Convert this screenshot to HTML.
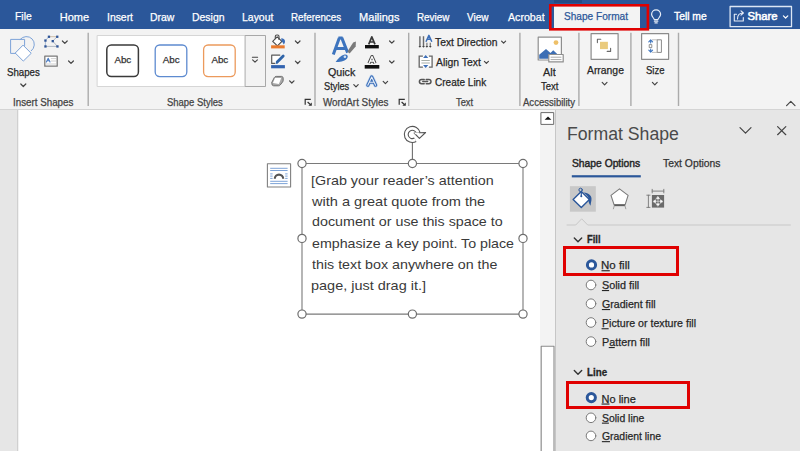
<!DOCTYPE html>
<html><head><meta charset="utf-8">
<style>
html,body{margin:0;padding:0;}
body{width:800px;height:451px;overflow:hidden;position:relative;background:#e6e6e6;font-family:"Liberation Sans",sans-serif;}
.t{position:absolute;white-space:pre;line-height:normal;transform-origin:0 0;-webkit-text-stroke:0.25px currentColor;}
.a{position:absolute;}
svg{position:absolute;overflow:visible;}
</style></head><body>
<!-- title bar -->
<div class="a" style="left:0;top:0;width:800px;height:29px;background:#2B579A"></div>
<div class="a" style="left:554px;top:0;width:28px;height:3px;background:#244A84"></div>
<div class="a" style="left:554px;top:6px;width:86px;height:24px;background:#F3F3F3"></div>
<!-- ribbon -->
<div class="a" style="left:0;top:29px;width:800px;height:80px;background:#F3F3F3;border-bottom:1px solid #D4D4D4"></div>
<!-- doc -->
<div class="a" style="left:0;top:110px;width:17px;height:341px;background:#E6E6E6;border-right:1px solid #D0D0D0"></div>
<div class="a" style="left:18px;top:110px;width:523px;height:341px;background:#FFFFFF"></div>
<div class="a" style="left:18px;top:110px;width:1px;height:341px;background:#F2F2F2"></div>
<!-- scrollbar -->
<div class="a" style="left:540px;top:110px;width:15px;height:341px;background:#F3F3F3"></div>
<!-- pane -->
<div class="a" style="left:555px;top:110px;width:1px;height:341px;background:#C6C6C6"></div>
<div class="a" style="left:556px;top:110px;width:244px;height:341px;background:#E6E6E6"></div>
<!-- red boxes -->

<div class="a" style="left:563px;top:246px;width:110px;height:24px;border:3px solid #E00000"></div>
<div class="a" style="left:566px;top:381px;width:118px;height:22px;border:3px solid #E00000"></div>
<svg width="800" height="451" style="left:0;top:0" viewBox="0 0 800 451">
<g fill="none" stroke-linecap="round" stroke-linejoin="round">
<rect x="550.3" y="5.3" width="97.6" height="24" stroke="#E00000" stroke-width="2.6" stroke-linejoin="miter"/>
<!-- lightbulb -->
<path d="M654.3,19.6 C653.6,17.6 651.6,16.6 651.6,14.3 A4.5,4.5 0 0 1 660.6,14.3 C660.6,16.6 658.6,17.6 657.9,19.6 Z" stroke="#E8EEF8" stroke-width="1.2"/>
<path d="M654.4,21.2 H657.8 M655,22.9 H657.2" stroke="#E8EEF8" stroke-width="1.2"/>
<!-- share button -->
<rect x="730.1" y="6.5" width="61.4" height="20.2" stroke="#DCE6F4" stroke-width="1.3"/>
<path d="M736.5,14.3 H734.3 V21 H743.3 V17.5" stroke="#E8EEF8" stroke-width="1.1"/>
<path d="M737.5,19 C737.5,15.5 739.5,13 743,13 M741,10.8 L743.4,13 L741,15.2" stroke="#E8EEF8" stroke-width="1.1"/>
<path d="M783.4,15.8 L785.6,18 L787.8,15.8" stroke="#FFFFFF" stroke-width="1.2"/>
<!-- ribbon chevrons -->
<g stroke="#444" stroke-width="1.2">
<path d="M20.8,84 L23.3,86.5 L25.8,84"/>
<path d="M62.4,41 L64.8,43.4 L67.2,41"/>
<path d="M68.6,61 L71,63.4 L73.4,61"/>
<path d="M295.4,41 L297.7,43.3 L300,41"/>
<path d="M295.4,61.2 L297.7,63.5 L300,61.2"/>
<path d="M289.6,80.8 L291.8,83 L294,80.8"/>
<path d="M353.8,84.6 L356,86.8 L358.2,84.6"/>
<path d="M389.6,41 L391.8,43.2 L394,41"/>
<path d="M389.6,61 L391.8,63.2 L394,61"/>
<path d="M383.2,81.4 L385.4,83.6 L387.6,81.4"/>
<path d="M501.6,41.2 L503.6,43.2 L505.6,41.2"/>
<path d="M484.4,61.3 L486.4,63.3 L488.4,61.3"/>
<path d="M602.2,82.4 L604.6,84.8 L607,82.4"/>
<path d="M652.4,82.4 L654.8,84.8 L657.2,82.4"/>
<path d="M786.6,105.6 L790.8,101.4 L795,105.6"/>
</g>
<!-- separators -->
<g stroke="#ABABAB" stroke-width="1.4" stroke-linecap="butt">
<path d="M88.2,32.8 V105.9 M315,32.8 V105.9 M408.7,32.8 V105.9 M519.9,32.8 V105.9 M578.9,32.8 V105.9 M630.9,32.8 V105.9 M678.5,32.8 V105.9"/>
</g>
<!-- Shapes icon -->
<g stroke="#7DA3D8" stroke-width="1">
<path d="M24.6,45.5 V39.4 H10.6 V53.4 H15.5"/>
<path d="M20.2,39.4 A8,8 0 1 1 31.3,50.8"/>
<path d="M23.3,45.4 L31.2,53.3 L23.3,61.1 L15.5,53.3 Z" fill="#FFFFFF"/>
</g>
<!-- edit shape icon -->
<path d="M48.9,36.7 H57.2" stroke="#C9B9A0" stroke-width="0.9"/>
<path d="M45.4,40.5 L48.9,36.7 M45.4,40.5 V46.4" stroke="#8FA8CC" stroke-width="0.8" stroke-dasharray="1 1"/>
<path d="M57.2,36.7 L52.7,41.1 L57.4,46.4 M45.4,46.4 H57.4" stroke="#A9B1BC" stroke-width="0.9"/>
<g fill="#2F5597" stroke="none">
<rect x="44.3" y="39.4" width="2.3" height="2.3"/><rect x="47.8" y="35.6" width="2.3" height="2.3"/>
<rect x="56.1" y="35.6" width="2.3" height="2.3"/><rect x="51.6" y="40" width="2.3" height="2.3"/>
<rect x="44.3" y="45.3" width="2.3" height="2.3"/><rect x="56.3" y="45.3" width="2.3" height="2.3"/>
</g>
<!-- text box icon -->
<rect x="44.8" y="56.2" width="12.4" height="10" fill="#FFFFFF" stroke="#7A7A7A" stroke-width="1.3"/>
<path d="M46.4,62 L48.2,58.2 L50,62 M47.1,60.7 H49.3" stroke="#4A7CC4" stroke-width="1.1"/>
<path d="M51.2,58.6 H55.8 M51.2,61 H55.8 M46.4,64 H55.8" stroke="#B0B0B0" stroke-width="0.6"/>
<!-- gallery -->
<rect x="97.5" y="35.5" width="168" height="51" fill="#FFFFFF" stroke="#D6D6D6" stroke-width="1"/>
<rect x="245.5" y="35.5" width="20" height="51" fill="#F3F3F3" stroke="#A8A8A8" stroke-width="1"/>
<path d="M252.4,57.2 H257.6 M252.6,59.8 L255,62.2 L257.4,59.8" stroke="#444" stroke-width="1.1"/>
<rect x="106.8" y="45" width="31.6" height="31.6" rx="4.5" fill="#FFFFFF" stroke="#3A3A3A" stroke-width="1.5"/>
<rect x="155.2" y="45" width="31.6" height="31.6" rx="4.5" fill="#FFFFFF" stroke="#5E8BD0" stroke-width="1.3"/>
<rect x="203.6" y="45" width="31.6" height="31.6" rx="4.5" fill="#FFFFFF" stroke="#EC9A5C" stroke-width="1.3"/>
<!-- shape fill icon -->
<path d="M272.7,41.4 L277.2,36.9 L281.9,41.4 L277.4,45.8 Z" fill="#FFFFFF" stroke="#4A4A4A" stroke-width="1.1"/>
<path d="M275.3,38.6 V36.4 Q275.3,35 276.8,35 H277.6 Q279,35 279,36.4 V39.4" stroke="#4A4A4A" stroke-width="1.1"/>
<path d="M281.2,38.2 C283.6,38.2 285.4,39.8 285,42 C284.8,43.2 284.2,44 283.6,44.6 C283.2,43 282.6,42 281.6,41.4 Z" fill="#3C6EB8" stroke="none"/>
<rect x="271.1" y="45.3" width="13.6" height="3.1" fill="#E97A2E" stroke="none"/>
<!-- shape outline icon -->
<rect x="271.7" y="55.2" width="8" height="8" fill="#FFFFFF" stroke="none"/>
<path d="M280.2,55.2 H271.7 V63.4 H275.2" stroke="#5A5A5A" stroke-width="1.2" stroke-linecap="butt"/>
<path d="M277.2,62 L283.2,56" stroke="#2F64A8" stroke-width="2.8" stroke-linecap="round"/>
<path d="M275.6,63.9 L276.3,61.4 L278.1,63.2 Z" fill="#2F64A8" stroke="none"/>
<rect x="271.1" y="65.1" width="13.8" height="3.2" fill="#3263B0" stroke="none"/>
<!-- shape effects -->
<path d="M271.8,82.4 L274.4,77.4 Q275,76.4 276.2,76.4 H281.6 Q282.8,76.4 283.1,77.8 L283.2,80.2 Q283.2,81.2 282.5,82.1 L280.2,85 Q279.6,85.8 278.6,85.8 H273.6 Q271.8,85.6 271.8,83.8 Z" fill="#A8A8A8" stroke="#6E6E6E" stroke-width="1"/>
<path d="M272.9,82.9 L275,78 H281.2 L278.9,83.9 Z" fill="#FFFFFF" stroke="none"/>
<!-- quick styles icon -->
<path d="M333.3,54.4 L339.3,37.9 M338.4,37.9 H342.6 M341.8,37.9 L347.6,52.6 M335.8,48.6 H345" stroke="#3D74BE" stroke-width="3" stroke-linecap="butt" stroke-linejoin="miter"/>
<path d="M353.2,42.6 L355.9,41.6 L355.7,46.4 L349.6,53.4 L347.4,51.6 Z" fill="#7A7A7A" stroke="none"/>
<path d="M335.6,61.9 C338,58.6 341,55.4 344.6,54.6 C346.8,54.2 348.6,55.6 347.4,58 C345.6,61 340,62.2 335.6,61.9 Z" fill="#3D74BE" stroke="none"/>
<circle cx="344.9" cy="56.7" r="1.3" fill="#D6E4F5" stroke="none"/>
<!-- text fill A -->
<path d="M368.7,44.4 L371.8,36.9 L375,44.4 M369.8,42 H373.9" stroke="#3A3A3A" stroke-width="1.7" stroke-linecap="butt"/>
<rect x="365" y="45" width="13.8" height="3.4" fill="#111" stroke="none"/>
<!-- text outline A -->
<path d="M369,63.4 L372,56.6 L375,63.4 M370.2,61 H373.8" stroke="#4A4A4A" stroke-width="3.3" stroke-linecap="butt" stroke-linejoin="round"/>
<path d="M369,63.4 L372,56.6 L375,63.4 M370.2,61 H373.8" stroke="#FFFFFF" stroke-width="1.3" stroke-linecap="butt" stroke-linejoin="round"/>
<rect x="364.7" y="65" width="14.6" height="3.6" fill="#111" stroke="none"/>
<!-- text effects A -->
<path d="M367.8,85.2 L371.7,77 L375.6,85.2 M369.4,82.2 H374" stroke="#C9DBF1" stroke-width="4.6" stroke-linecap="round"/>
<path d="M367.8,85.2 L371.7,77 L375.6,85.2 M369.4,82.2 H374" stroke="#3D6FB8" stroke-width="3.2" stroke-linecap="round"/>
<path d="M367.8,85.2 L371.7,77 L375.6,85.2 M369.4,82.2 H374" stroke="#E6EEF8" stroke-width="1.1" stroke-linecap="round"/>
<!-- text direction icon -->
<path d="M419.9,36.3 V46.6 M423.5,36.3 V46.6" stroke="#6A6A6A" stroke-width="1.4" stroke-linecap="butt"/>
<path d="M426.9,42.8 V46.6 M430.3,42.8 V46.6" stroke="#777" stroke-width="1.2" stroke-linecap="butt"/>
<path d="M418.5,46 L421.3,46 L419.9,47.8 Z M422.1,46 L424.9,46 L423.5,47.8 Z M425.5,46 L428.3,46 L426.9,47.8 Z M428.9,46 L431.7,46 L430.3,47.8 Z " fill="#444" stroke="none"/>
<path d="M426.2,41.2 L428.9,35.4 L431.6,41.2 M427.2,39.3 H430.6" stroke="#3D6FB8" stroke-width="1.5"/>
<!-- align text icon -->
<rect x="419.2" y="56.2" width="12.9" height="10.9" fill="#FFFFFF" stroke="none"/>
<path d="M422.9,56.2 H419.2 V67.1 H422.9 M428.9,56.2 H432.1 V67.1 H428.9" stroke="#666" stroke-width="1.3" stroke-linecap="butt" stroke-linejoin="miter"/>
<path d="M425.7,55.1 L428.3,58.1 H423.1 Z M425.7,68.1 L428.3,65.1 H423.1 Z" fill="#3D6FB8" stroke="none"/>
<path d="M421.4,60.5 H429.8 M421.4,63 H429.8" stroke="#9DA59D" stroke-width="0.9" stroke-linecap="butt"/>
<!-- create link -->
<path d="M424.2,79.4 H421.6 A2.2,2.2 0 0 0 421.6,83.8 H424.2 M426.2,79.4 H428.8 A2.2,2.2 0 0 1 428.8,83.8 H426.2 M422.8,81.6 H427.6" stroke="#555" stroke-width="1.5"/>
<!-- alt text icon -->
<rect x="538.2" y="37.2" width="23.2" height="22.8" fill="#FFFFFF" stroke="#8F8F8F" stroke-width="1.2"/>
<circle cx="556" cy="42.6" r="2.4" fill="#EEC068" stroke="none"/>
<path d="M539.2,58.8 V54.8 L546,49 L550.5,53 L553.2,50.2 L557,53.8 V58.8 Z" fill="#3C6EB4" stroke="none"/>
<rect x="548.8" y="54.5" width="14.4" height="7.4" fill="#FFFFFF" stroke="#8F8F8F" stroke-width="1.2"/>
<path d="M551,57.2 H561 M551,59.6 H561" stroke="#A0A0A0" stroke-width="0.9"/>
<!-- arrange -->
<rect x="591.1" y="33.7" width="27" height="25.6" fill="#FFFFFF" stroke="#8C8C8C" stroke-width="1.2"/>
<rect x="600" y="41.8" width="7.9" height="7.3" fill="#EACB7E" stroke="none"/>
<path d="M597.4,42.6 V39.2 H600.8 M610.6,48.2 V51.4 H607.2" stroke="#6A6A6A" stroke-width="1.1"/>
<!-- size -->
<rect x="641.6" y="33.7" width="27" height="25.6" fill="#FFFFFF" stroke="#8C8C8C" stroke-width="1.2"/>
<rect x="657.6" y="39.8" width="3.8" height="12.6" fill="#FFFFFF" stroke="#8A8A8A" stroke-width="1"/>
<path d="M650.7,40 V43 M648.8,41.8 L650.7,39.9 L652.6,41.8 M650.7,49 V52 M648.8,50.2 L650.7,52.1 L652.6,50.2" stroke="#3D74BE" stroke-width="1.1"/>
<rect x="649.6" y="44.6" width="2.2" height="3" fill="none" stroke="#777" stroke-width="0.8"/>
<path d="M652.5,39.8 H657.4 M652.5,52.4 H657.4" stroke="#999" stroke-width="0.7" stroke-dasharray="1 1"/>
<!-- dialog launchers -->
<path d="M305.2,104.8 V99.4 H310.8 M307.6,102 L310.6,104.8" stroke="#333" stroke-width="1.2" stroke-linecap="butt" stroke-linejoin="miter"/><path d="M311.8,105.8 H308.4 L311.8,102.4 Z" fill="#333" stroke="none"/>
<path d="M399.2,104.8 V99.4 H404.8 M401.6,102 L404.6,104.8" stroke="#333" stroke-width="1.2" stroke-linecap="butt" stroke-linejoin="miter"/><path d="M405.8,105.8 H402.4 L405.8,102.4 Z" fill="#333" stroke="none"/>
</g>
</svg>

<svg width="800" height="451" style="left:0;top:0" viewBox="0 0 800 451">
<g fill="none" stroke-linecap="round" stroke-linejoin="round">
<!-- layout options icon -->
<rect x="267.4" y="163.8" width="23.2" height="23.2" fill="#FFFFFF" stroke="#808080" stroke-width="1.1"/>
<path d="M270.2,168.3 H287.6 M270.2,170.5 H287.6 M270.2,181.3 H287.6 M270.2,183.6 H287.6 M270.2,173.9 H272.6 M285.2,173.9 H287.6 M270.2,176.1 H272.6 M285.2,176.1 H287.6 M270.2,178.4 H272.6 M285.2,178.4 H287.6" stroke="#6E98D2" stroke-width="0.9" stroke-linecap="butt"/>
<path d="M274.8,178.8 A4.2,4.2 0 0 1 283.2,178.8" stroke="#555" stroke-width="2.1" stroke-linecap="butt"/>
<!-- text box -->
<rect x="302" y="163.5" width="221" height="150.6" stroke="#7A7A7A" stroke-width="1.1"/>
<path d="M412.4,142.2 V159.3" stroke="#6E6E6E" stroke-width="1.1"/>
<g fill="#FFFFFF" stroke="#6E6E6E" stroke-width="1.2">
<circle cx="302" cy="163.5" r="4.1"/><circle cx="412.4" cy="163.5" r="4.1"/><circle cx="523" cy="163.5" r="4.1"/>
<circle cx="302" cy="238.4" r="4.1"/><circle cx="523" cy="238.4" r="4.1"/>
<circle cx="302" cy="314.1" r="4.1"/><circle cx="412.4" cy="314.1" r="4.1"/><circle cx="523" cy="314.1" r="4.1"/>
</g>
<!-- rotate -->
<path d="M415.3,139.8 A6.1,6.1 0 1 1 418.3,133.2" stroke="#555" stroke-width="5" stroke-linecap="butt"/>
<path d="M415.3,139.8 A6.1,6.1 0 1 1 418.3,133.2" stroke="#FFFFFF" stroke-width="2.8" stroke-linecap="butt"/>
<path d="M414.2,133 L425.6,132.5 L419.4,138.4 Z" fill="#FFFFFF" stroke="#555" stroke-width="1.1"/>
<path d="M415.4,133.4 L418.5,133.3" stroke="#FFFFFF" stroke-width="1.6"/>
<!-- scrollbar -->
<rect x="541.3" y="112.6" width="12.4" height="11.8" fill="#FFFFFF" stroke="#6A6A6A" stroke-width="1"/>
<path d="M544.6,119.8 H551.4 L548,116.4 Z" fill="#111" stroke="none"/>
<rect x="541.2" y="346.2" width="12.8" height="120" fill="#FFFFFF" stroke="#8A8A8A" stroke-width="1.1"/>
<!-- pane header -->
<path d="M740,127.6 L745.5,133.2 L751,127.6" stroke="#444" stroke-width="1.2"/>
<path d="M777.6,126.6 L785.8,134.7 M785.8,126.6 L777.6,134.7" stroke="#444" stroke-width="1.2"/>
<rect x="571.8" y="175.2" width="69" height="2.2" fill="#2B579A" stroke="none"/>
<!-- fill icon -->
<rect x="569.9" y="186.2" width="25.9" height="25.5" fill="#C8C8C8" stroke="none"/>
<path d="M573.1,199.5 L581.3,191.5 L589.4,199.5 L581.3,207.6 Z" fill="#FFFFFF" stroke="#2B579A" stroke-width="1.4"/>
<circle cx="580.6" cy="189.9" r="1.7" stroke="#2B579A" stroke-width="1"/>
<path d="M581.3,191.5 V196" stroke="#2B579A" stroke-width="1.2"/>
<circle cx="581.3" cy="196.3" r="1" fill="#2B579A" stroke="none"/>
<path d="M583.5,192.6 C589,193.2 592.3,196 591.4,200.4 C591,202.6 590.6,204.2 590.6,205.8 C589.4,204 588.3,202.2 588.6,199.4 C588.8,197.5 587.5,195.2 583.5,192.6 Z" fill="#2B579A" stroke="none"/>
<!-- pentagon -->
<path d="M619.5,188.9 L628.1,195.4 L625,205.1 L614.2,205.1 L611,195.4 Z" fill="#FFFFFF" stroke="#7A7A7A" stroke-width="1.1"/>
<path d="M614.2,205.2 H625" stroke="#5E5E5E" stroke-width="1.9" stroke-linecap="butt"/>
<path d="M614.2,206 L613.4,208.8 M625,206 L625.8,208.8" stroke="#A0A0A0" stroke-width="1"/>
<!-- size/props icon -->
<rect x="651.9" y="195" width="12.2" height="12.6" fill="#6A6A6A" stroke="none"/>
<path d="M658,198.4 V204.2 M655.2,201.3 H660.8" stroke="#DDDDDD" stroke-width="0.7"/>
<path d="M658,196.6 L659.6,198.8 H656.4 Z M658,206 L659.6,203.8 H656.4 Z M653.3,201.3 L655.5,199.7 V202.9 Z M662.7,201.3 L660.5,199.7 V202.9 Z" fill="#FFFFFF" stroke="#FFFFFF" stroke-width="0.5"/>
<path d="M652.2,191.1 H663.8 M652.2,189.3 V192.9 M663.8,189.3 V192.9" stroke="#777" stroke-width="0.9"/>
<path d="M648.4,195.2 V207.4 M646.8,195.2 H650 M646.8,207.4 H650" stroke="#777" stroke-width="0.9"/>
<!-- separator w/ notch -->
<path d="M566.6,225 H575.7 L581.7,218.8 L587.7,225 H790.8" stroke="#C8C8C8" stroke-width="1" stroke-linecap="butt" stroke-linejoin="miter"/>
<!-- section chevrons -->
<path d="M574.3,238 L578,241.7 L581.7,238" stroke="#333" stroke-width="1.4"/>
<path d="M574.3,370.6 L578,374.3 L581.7,370.6" stroke="#333" stroke-width="1.4"/>
<!-- radios -->
<circle cx="591.5" cy="264.9" r="4.1" fill="#FFFFFF" stroke="#2B579A" stroke-width="3"/>
<circle cx="591.3" cy="397.6" r="4.1" fill="#FFFFFF" stroke="#2B579A" stroke-width="3"/>
<g fill="#FFFFFF" stroke="#7A7A7A" stroke-width="1">
<circle cx="591" cy="285" r="4.8"/><circle cx="591" cy="303.7" r="4.8"/><circle cx="591" cy="322.5" r="4.8"/>
<circle cx="591" cy="341.6" r="4.8"/><circle cx="591" cy="417.8" r="4.8"/><circle cx="591" cy="435.9" r="4.8"/>
</g>
</g>
</svg>

<svg width="800" height="451" style="left:0;top:0"><rect x="601.48" y="270.20" width="8.31" height="1.1" fill="#262626"/><rect x="601.91" y="290.00" width="7.20" height="1.1" fill="#262626"/><rect x="601.87" y="309.00" width="8.25" height="1.1" fill="#262626"/><rect x="601.55" y="328.20" width="7.09" height="1.1" fill="#262626"/><rect x="608.73" y="347.00" width="6.00" height="1.1" fill="#262626"/><rect x="601.52" y="403.50" width="7.96" height="1.1" fill="#262626"/><rect x="601.93" y="422.60" width="6.96" height="1.1" fill="#262626"/><rect x="601.88" y="441.10" width="8.09" height="1.1" fill="#262626"/></svg>
<div class="t" style="left:14.77px;top:10.04px;font-size:11px;color:#ffffff;font-weight:400;transform:scaleX(0.943);">File</div>
<div class="t" style="left:59.72px;top:10.54px;font-size:11px;color:#ffffff;font-weight:400;">Home</div>
<div class="t" style="left:106.56px;top:10.54px;font-size:11px;color:#ffffff;font-weight:400;transform:scaleX(0.945);">Insert</div>
<div class="t" style="left:150.17px;top:10.54px;font-size:11px;color:#ffffff;font-weight:400;transform:scaleX(0.947);">Draw</div>
<div class="t" style="left:192.16px;top:10.54px;font-size:11px;color:#ffffff;font-weight:400;transform:scaleX(0.950);">Design</div>
<div class="t" style="left:241.66px;top:10.54px;font-size:11px;color:#ffffff;font-weight:400;transform:scaleX(0.951);">Layout</div>
<div class="t" style="left:291.22px;top:10.54px;font-size:11px;color:#ffffff;font-weight:400;transform:scaleX(0.891);">References</div>
<div class="t" style="left:359.12px;top:10.54px;font-size:11px;color:#ffffff;font-weight:400;">Mailings</div>
<div class="t" style="left:416.71px;top:10.54px;font-size:11px;color:#ffffff;font-weight:400;transform:scaleX(0.895);">Review</div>
<div class="t" style="left:467.45px;top:10.54px;font-size:11px;color:#ffffff;font-weight:400;transform:scaleX(0.911);">View</div>
<div class="t" style="left:507.50px;top:10.54px;font-size:11px;color:#ffffff;font-weight:400;transform:scaleX(0.965);">Acrobat</div>
<div class="t" style="left:564.05px;top:10.04px;font-size:11px;color:#2B579A;font-weight:400;transform:scaleX(0.918);">Shape Format</div>
<div class="t" style="left:673.79px;top:10.04px;font-size:11px;color:#ffffff;font-weight:400;transform:scaleX(0.938);-webkit-text-stroke:0.4px currentColor;">Tell me</div>
<div class="t" style="left:747.49px;top:10.37px;font-size:11.3px;color:#ffffff;font-weight:400;-webkit-text-stroke:0.55px currentColor;">Share</div>
<div class="t" style="left:6.56px;top:66.05px;font-size:11px;color:#262626;font-weight:400;transform:scaleX(0.879);">Shapes</div>
<div class="t" style="left:12.52px;top:97.15px;font-size:10px;color:#444444;font-weight:400;transform:scaleX(0.979);">Insert Shapes</div>
<div class="t" style="left:166.57px;top:97.15px;font-size:10px;color:#444444;font-weight:400;transform:scaleX(0.946);">Shape Styles</div>
<div class="t" style="left:114.40px;top:54.13px;font-size:9.8px;color:#333333;font-weight:400;">Abc</div>
<div class="t" style="left:162.80px;top:54.13px;font-size:9.8px;color:#333333;font-weight:400;">Abc</div>
<div class="t" style="left:211.40px;top:54.13px;font-size:9.8px;color:#333333;font-weight:400;">Abc</div>
<div class="t" style="left:327.72px;top:65.55px;font-size:11px;color:#262626;font-weight:400;transform:scaleX(0.971);">Quick</div>
<div class="t" style="left:324.08px;top:79.55px;font-size:11px;color:#262626;font-weight:400;transform:scaleX(0.842);">Styles</div>
<div class="t" style="left:322.65px;top:97.15px;font-size:10px;color:#444444;font-weight:400;transform:scaleX(0.983);">WordArt Styles</div>
<div class="t" style="left:435.49px;top:36.34px;font-size:11px;color:#262626;font-weight:400;transform:scaleX(0.937);">Text Direction</div>
<div class="t" style="left:435.70px;top:56.25px;font-size:11px;color:#262626;font-weight:400;transform:scaleX(0.945);">Align Text</div>
<div class="t" style="left:435.20px;top:76.14px;font-size:11px;color:#262626;font-weight:400;transform:scaleX(0.910);">Create Link</div>
<div class="t" style="left:456.01px;top:97.15px;font-size:10px;color:#444444;font-weight:400;transform:scaleX(0.931);">Text</div>
<div class="t" style="left:543.00px;top:65.55px;font-size:11px;color:#262626;font-weight:400;transform:scaleX(0.987);">Alt</div>
<div class="t" style="left:540.81px;top:79.55px;font-size:11px;color:#262626;font-weight:400;transform:scaleX(0.866);">Text</div>
<div class="t" style="left:523.40px;top:97.15px;font-size:10px;color:#444444;font-weight:400;transform:scaleX(0.955);">Accessibility</div>
<div class="t" style="left:586.50px;top:63.64px;font-size:11px;color:#262626;font-weight:400;transform:scaleX(0.943);">Arrange</div>
<div class="t" style="left:645.67px;top:63.64px;font-size:11px;color:#262626;font-weight:400;transform:scaleX(0.867);">Size</div>
<div class="t" style="left:311.40px;top:172.76px;font-size:13.3px;color:#3A3A3A;font-weight:400;transform:scaleX(1.078);-webkit-text-stroke:0;">[Grab your reader’s attention</div>
<div class="t" style="left:312.40px;top:193.56px;font-size:13.3px;color:#3A3A3A;font-weight:400;transform:scaleX(1.095);-webkit-text-stroke:0;">with a great quote from the</div>
<div class="t" style="left:311.83px;top:214.36px;font-size:13.3px;color:#3A3A3A;font-weight:400;transform:scaleX(1.075);-webkit-text-stroke:0;">document or use this space to</div>
<div class="t" style="left:311.83px;top:235.76px;font-size:13.3px;color:#3A3A3A;font-weight:400;transform:scaleX(1.069);-webkit-text-stroke:0;">emphasize a key point. To place</div>
<div class="t" style="left:312.19px;top:257.06px;font-size:13.3px;color:#3A3A3A;font-weight:400;transform:scaleX(1.072);-webkit-text-stroke:0;">this text box anywhere on the</div>
<div class="t" style="left:311.46px;top:278.36px;font-size:13.3px;color:#3A3A3A;font-weight:400;transform:scaleX(1.088);-webkit-text-stroke:0;">page, just drag it.]</div>
<div class="t" style="left:567.29px;top:123.76px;font-size:17.5px;color:#4A4A4A;font-weight:400;transform:scaleX(1.009);-webkit-text-stroke:0;">Format Shape</div>
<div class="t" style="left:572.04px;top:156.64px;font-size:11px;color:#262626;font-weight:400;transform:scaleX(0.936);-webkit-text-stroke:0.45px currentColor;">Shape Options</div>
<div class="t" style="left:662.59px;top:156.64px;font-size:11px;color:#333333;font-weight:400;transform:scaleX(0.941);">Text Options</div>
<div class="t" style="left:587.09px;top:233.85px;font-size:10px;color:#262626;font-weight:700;transform:scaleX(0.939);-webkit-text-stroke:0.3px currentColor;">Fill</div>
<div class="t" style="left:587.06px;top:367.25px;font-size:10px;color:#262626;font-weight:700;transform:scaleX(0.977);-webkit-text-stroke:0.3px currentColor;">Line</div>
<div class="t" style="left:601.48px;top:259.25px;font-size:11px;color:#262626;font-weight:400;transform:scaleX(1.046);">No fill</div>
<div class="t" style="left:601.91px;top:279.05px;font-size:11px;color:#262626;font-weight:400;transform:scaleX(0.981);">Solid fill</div>
<div class="t" style="left:601.87px;top:298.05px;font-size:11px;color:#262626;font-weight:400;transform:scaleX(0.964);">Gradient fill</div>
<div class="t" style="left:601.55px;top:317.25px;font-size:11px;color:#262626;font-weight:400;transform:scaleX(0.967);">Picture or texture fill</div>
<div class="t" style="left:601.54px;top:336.05px;font-size:11px;color:#262626;font-weight:400;transform:scaleX(0.981);">Pattern fill</div>
<div class="t" style="left:601.52px;top:392.55px;font-size:11px;color:#262626;font-weight:400;">No line</div>
<div class="t" style="left:601.93px;top:411.65px;font-size:11px;color:#262626;font-weight:400;transform:scaleX(0.949);">Solid line</div>
<div class="t" style="left:601.88px;top:430.15px;font-size:11px;color:#262626;font-weight:400;transform:scaleX(0.946);">Gradient line</div>
</body></html>
